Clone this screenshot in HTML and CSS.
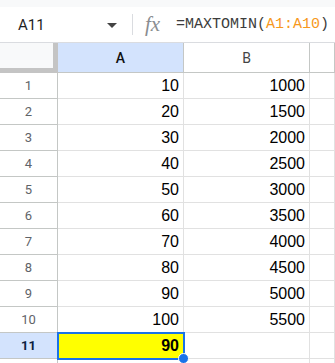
FILE: index.html
```html
<!DOCTYPE html>
<html lang="en">
<head>
  <meta charset="UTF-8" />
  <title>MAXTOMIN</title>
  <link rel="stylesheet" href="styles.css">
</head>
<body>
  <div class="top-band"></div>

  <div class="formula-bar">
    <div class="name-box">A11</div>
    <div class="caret"></div>
    <div class="divider"></div>
    <div class="fx">fx</div>
    <div class="formula">=MAXTOMIN(<span class="ref">A1:A10</span>)</div>
  </div>

  <div class="sheet" id="sheet">
    <div class="corner"></div>
    <div class="col-head selected">A</div>
    <div class="col-head">B</div>
    <div class="col-head"></div>
  </div>

  <script>
    const sheet = document.getElementById('sheet');
    const rows = [
      [10, 1000], [20, 1500], [30, 2000], [40, 2500], [50, 3000],
      [60, 3500], [70, 4000], [80, 4500], [90, 5000], [100, 5500]
    ];

    function addRow(num, a, b, active) {
      sheet.insertAdjacentHTML('beforeend', `
        <div class="row-head${active ? ' selected' : ''}">${num}</div>
        <div class="cell${active ? ' active' : ''}">${a}</div>
        <div class="cell">${b}</div>
        <div class="cell"></div>
      `);
    }

    rows.forEach((r, i) => addRow(i + 1, r[0], r[1], false));
    addRow(11, 90, '', true);
    // next row only peeks in at the bottom edge
    addRow('', '', '', false);
  </script>
</body>
</html>
```

FILE: styles.css
```css
body {
  margin: 0;
  width: 335px;
  height: 363px;
  overflow: hidden;
  background: #fff;
  font-family: "Liberation Sans", Arial, sans-serif;
}
.top-band {
  height: 7px;
  background-color: #f8f9fa;
}
.formula-bar {
  display: flex;
  align-items: center;
  height: 35px;
  border-bottom: 1px solid #dadce0;
  white-space: nowrap;
}
.name-box {
  width: 89px;
  padding-left: 18px;
  font-family: Roboto, sans-serif;
  font-size: 15px;
  color: #1f1f1f;
}
.caret {
  width: 0;
  height: 0;
  border-left: 5px solid transparent;
  border-right: 5px solid transparent;
  border-top: 5px solid #444;
  margin-top: 1px;
}
.divider {
  width: 1px;
  height: 21px;
  background-color: #dadce0;
  margin-left: 15px;
}
.fx {
  margin-left: 12px;
  font-family: "Liberation Serif", serif;
  font-style: italic;
  font-size: 21px;
  color: #8a8d91;
  width: 31px;
}
.formula {
  font-family: "Liberation Mono", monospace;
  font-size: 15px;
  color: #3c3c3c;
}
.formula .ref {
  color: #f7981d;
}
.sheet {
  display: grid;
  grid-template-columns: 58px 126px 126px 1fr;
  grid-template-rows: 30px;
  grid-auto-rows: 26px;
}
.sheet > div {
  box-sizing: border-box;
}
.corner {
  background-color: #f8f9fa;
  border-right: 5px solid #c4c4c4;
  border-bottom: 5px solid #c4c4c4;
}
.col-head {
  display: flex;
  align-items: center;
  justify-content: center;
  border-right: 1px solid #c4c7c5;
  border-bottom: 1px solid #c4c7c5;
  font-family: Roboto, sans-serif;
  font-size: 14px;
  color: #444;
  padding-top: 1px;
}
.row-head {
  display: flex;
  align-items: center;
  justify-content: center;
  border-right: 1px solid #c4c7c5;
  border-bottom: 1px solid #c4c7c5;
  font-family: Roboto, sans-serif;
  font-size: 13px;
  color: #5f6368;
}
.selected {
  background-color: #d3e3fd;
  color: #0b1f3f;
  font-weight: 500;
}
.col-head.selected {
  font-weight: 500;
  color: #111;
}
.row-head.selected {
  font-weight: bold;
}
.cell {
  display: flex;
  align-items: center;
  justify-content: flex-end;
  padding-right: 4px;
  border-right: 1px solid #e1e1e1;
  border-bottom: 1px solid #e1e1e1;
  font-size: 16px;
  color: #000;
}
.cell.active {
  position: relative;
  background-color: #ffff00;
  font-weight: bold;
  outline: 2px solid #1a73e8;
  outline-offset: -1px;
}
.cell.active::after {
  content: "";
  position: absolute;
  right: -6px;
  bottom: -6px;
  width: 9px;
  height: 9px;
  border-radius: 50%;
  background-color: #1a73e8;
  border: 1px solid #fff;
}
```
